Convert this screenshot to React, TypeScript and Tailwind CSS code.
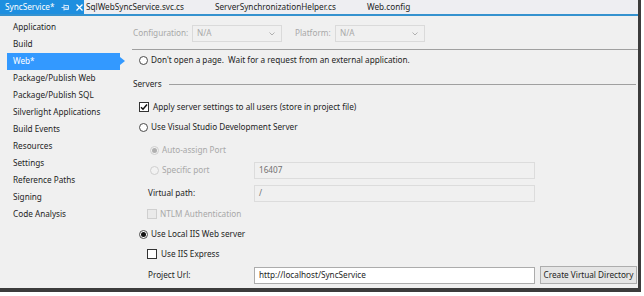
import type { ReactNode } from "react";

const font = { fontFamily: '"Noto Sans", "Open Sans", sans-serif' };

const navItems = [
  "Application",
  "Build",
  "Web*",
  "Package/Publish Web",
  "Package/Publish SQL",
  "Silverlight Applications",
  "Build Events",
  "Resources",
  "Settings",
  "Reference Paths",
  "Signing",
  "Code Analysis",
];

function Radio({ checked, disabled }: { checked?: boolean; disabled?: boolean }) {
  return (
    <span
      className={`flex h-[9px] w-[9px] shrink-0 items-center justify-center rounded-full border ${
        disabled ? "border-[#cfcfcf] bg-[#f2f2f2]" : "border-[#4a4a4a] bg-white"
      }`}
    >
      {checked && (
        <span className={`h-[5px] w-[5px] rounded-full ${disabled ? "bg-[#b0b0b0]" : "bg-[#111]"}`} />
      )}
    </span>
  );
}

function Check({ checked, disabled }: { checked?: boolean; disabled?: boolean }) {
  return (
    <span
      className={`flex h-[10px] w-[10px] shrink-0 items-center justify-center border ${
        disabled ? "border-[#cfcfcf] bg-[#eaeaea]" : "border-[#333] bg-white"
      }`}
    >
      {checked && (
        <svg width="8" height="8" viewBox="0 0 8 8">
          <path d="M1 4.2 L3 6.2 L7 1.5" fill="none" stroke="#111" strokeWidth="1.5" />
        </svg>
      )}
    </span>
  );
}

function Row({ className, children }: { className: string; children: ReactNode }) {
  return <div className={`flex items-center whitespace-nowrap ${className}`}>{children}</div>;
}

function Select() {
  return (
    <div className="flex h-[17px] w-[90px] items-center justify-between border border-[#dadada] bg-[#f0f0f0] pl-[4px] pr-[6px] text-[#a8a8a8]">
      <span>N/A</span>
      <svg width="6" height="4" viewBox="0 0 6 4">
        <path d="M0.5 0.5 L3 3 L5.5 0.5" fill="none" stroke="#b0b0b0" strokeWidth="1" />
      </svg>
    </div>
  );
}

export default function App() {
  return (
    <div className="h-[296px] w-[644px] whitespace-nowrap bg-white text-[8.2px] text-[#1e1e1e]" style={font}>
      <div className="flex h-[292px] w-[641px] flex-col border-b-[4px] border-r-[3px] border-[#3c3c3c] bg-[#f0f0f0]">
        {/* document tabs */}
        <div className="flex h-[14px] items-center bg-[#eeeef2]">
          <div className="flex h-full w-[84px] shrink-0 items-center bg-[#1e8fe0] pl-[5px] text-white">
            <span>SyncService*</span>
            <svg className="ml-[6px]" width="9" height="7" viewBox="0 0 9 7">
              <path d="M0.5 3.5 H3 M3 0.5 V6.5 M3 1.5 H7.5 V5.5 H3 M3 4 H7.5" fill="none" stroke="#cfe6fb" strokeWidth="1" />
            </svg>
            <svg className="ml-[6px]" width="7" height="7" viewBox="0 0 7 7">
              <path d="M0.5 0.5 L6.5 6.5 M6.5 0.5 L0.5 6.5" stroke="white" strokeWidth="1.3" />
            </svg>
          </div>
          <span className="w-[131px] shrink-0 pl-[2px]">SqlWebSyncService.svc.cs</span>
          <span className="w-[152px] shrink-0">ServerSynchronizationHelper.cs</span>
          <span>Web.config</span>
        </div>
        <div className="h-[2px] bg-[#3592cf]" />

        <div className="flex flex-1">
          {/* side navigation */}
          <div className="w-[130px] shrink-0 pt-[3px]">
            {navItems.map((item) => (
              <div key={item} className="relative flex h-[17px] items-center">
                {item === "Web*" ? (
                  <div className="ml-[7px] flex h-full w-[113px] items-center bg-[#3399ff] pl-[6px] text-white">
                    {item}
                    <span className="absolute left-[120px] top-[4px] h-0 w-0 border-y-[4.5px] border-l-[5px] border-y-transparent border-l-[#3399ff]" />
                  </div>
                ) : (
                  <span className="pl-[13px]">{item}</span>
                )}
              </div>
            ))}
          </div>

          {/* page content */}
          <div className="flex-1 pt-[9px]">
            <Row className="h-[17px] pl-[3px] text-[#a8a8a8]">
              <span className="w-[59px]">Configuration:</span>
              <Select />
              <span className="ml-[13px] w-[40px]">Platform:</span>
              <Select />
            </Row>
            <div className="ml-[2px] mt-[7px] h-px bg-[#a0a0a0]" />
            <Row className="mt-[2px] h-[17px] gap-[3px] pl-[9px]">
              <Radio />
              <span>Don't open a page.&nbsp; Wait for a request from an external application.</span>
            </Row>
            <Row className="mt-[7px] h-[16px] pl-[3px]">
              <span>Servers</span>
              <div className="ml-[7px] mr-[2px] h-px flex-1 bg-[#a0a0a0]" />
            </Row>
            <Row className="mt-[7px] h-[16px] gap-[4px] pl-[9px]">
              <Check checked />
              <span>Apply server settings to all users (store in project file)</span>
            </Row>
            <Row className="mt-[4px] h-[16px] gap-[3px] pl-[9px]">
              <Radio />
              <span>Use Visual Studio Development Server</span>
            </Row>
            <Row className="mt-[7px] h-[16px] gap-[3px] pl-[20px] text-[#a8a8a8]">
              <Radio checked disabled />
              <span>Auto-assign Port</span>
            </Row>
            <Row className="mt-[4px] h-[17px] pl-[20px] text-[#a8a8a8]">
              <div className="flex w-[104px] items-center gap-[3px]">
                <Radio disabled />
                <span>Specific port</span>
              </div>
              <div className="flex h-full w-[281px] items-center border border-[#dcdcdc] pl-[4px] text-[#707070]">
                16407
              </div>
            </Row>
            <Row className="mt-[6px] h-[17px] pl-[18px]">
              <span className="w-[106px]">Virtual path:</span>
              <div className="flex h-full w-[281px] items-center border border-[#dcdcdc] pl-[4px] text-[#707070]">
                /
              </div>
            </Row>
            <Row className="mt-[4px] h-[16px] gap-[3px] pl-[17px] text-[#a8a8a8]">
              <Check disabled />
              <span>NTLM Authentication</span>
            </Row>
            <Row className="mt-[4px] h-[16px] gap-[3px] pl-[9px]">
              <Radio checked />
              <span>Use Local IIS Web server</span>
            </Row>
            <Row className="mt-[4px] h-[16px] gap-[4px] pl-[17px]">
              <Check />
              <span>Use IIS Express</span>
            </Row>
            <Row className="mt-[4px] h-[18px] pl-[18px]">
              <span className="w-[106px]">Project Url:</span>
              <div className="flex h-[17px] w-[281px] items-center border border-[#acacac] bg-white pl-[4px]">
                http://localhost/SyncService
              </div>
              <button className="ml-[5px] h-[18px] w-[97px] whitespace-nowrap border border-[#adadad] bg-[#e5e5e5]">
                Create Virtual Directory
              </button>
            </Row>
          </div>
        </div>
      </div>
    </div>
  );
}
